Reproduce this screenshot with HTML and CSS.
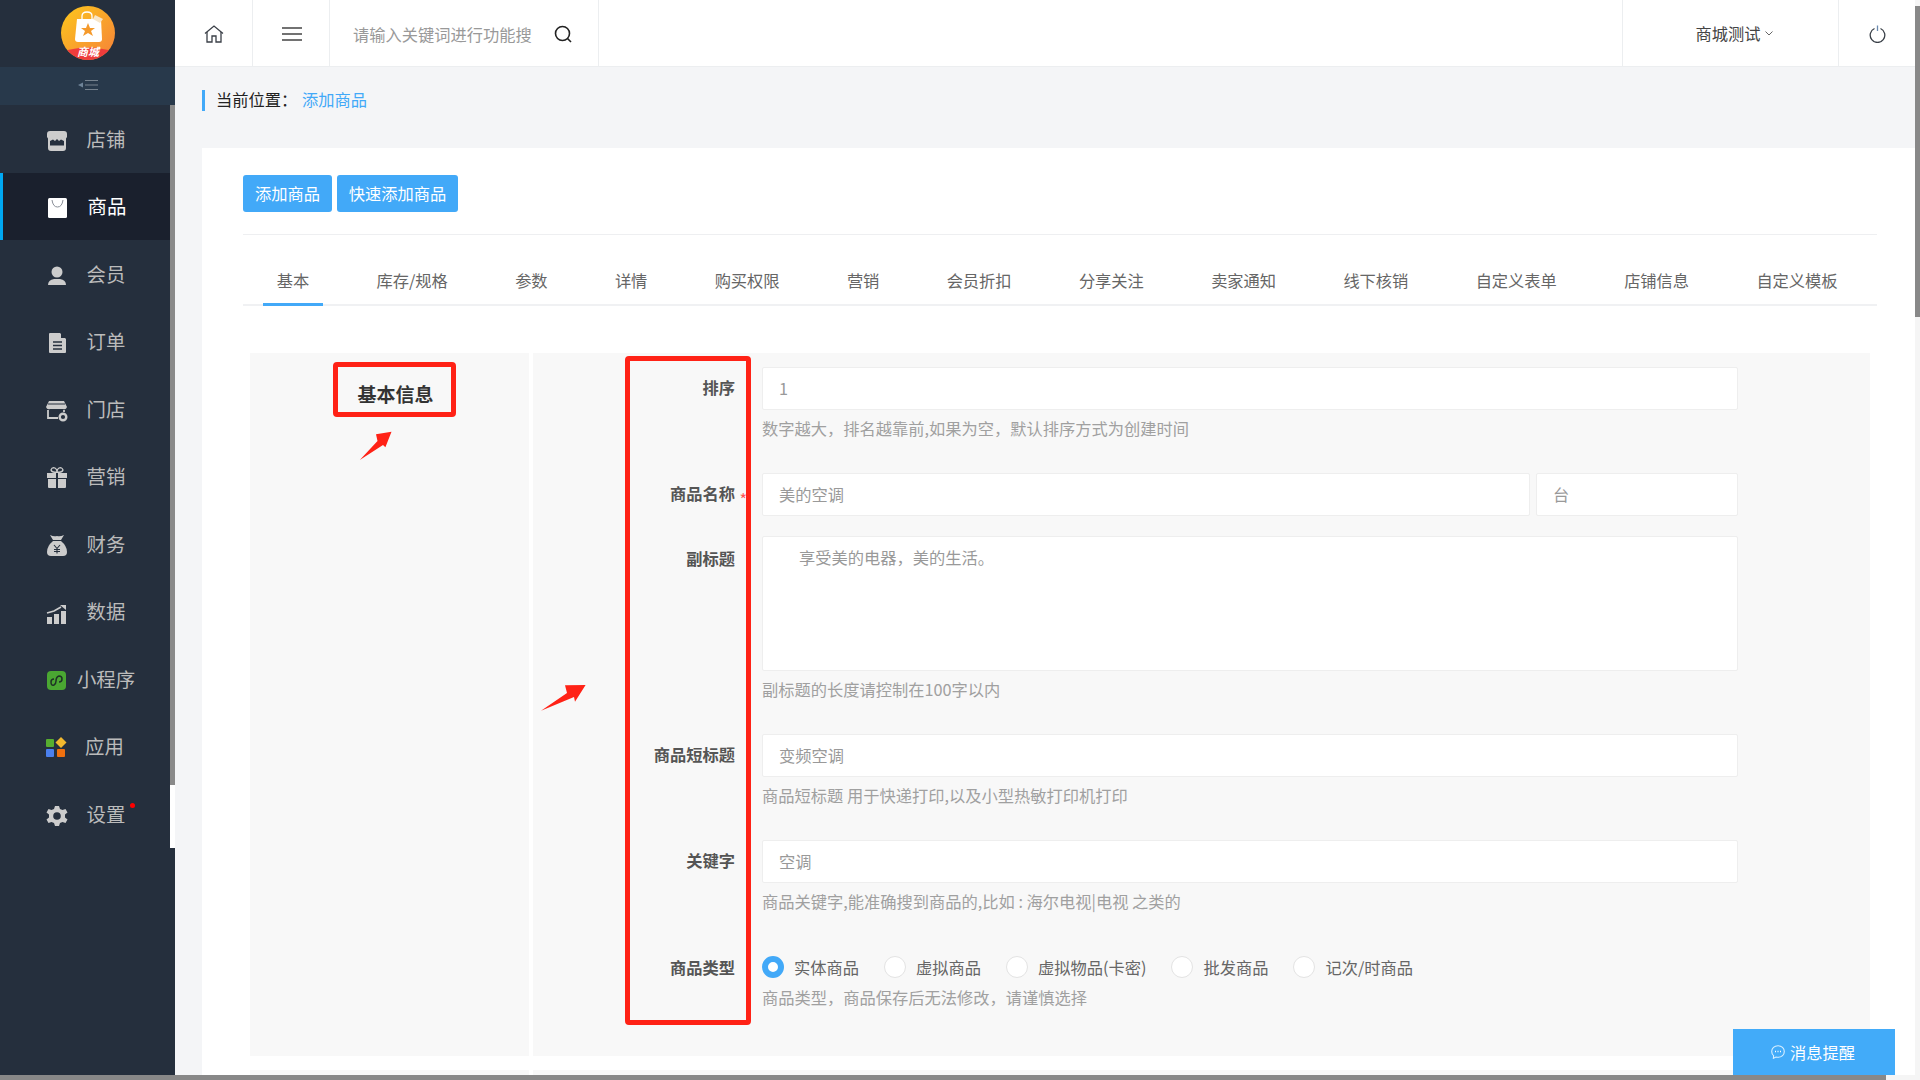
FILE: index.html
```html
<!DOCTYPE html>
<html lang="zh-CN">
<head>
<meta charset="utf-8">
<title>添加商品</title>
<link rel="stylesheet" href="styles.css">
</head>
<body>
<div class="app">
  <aside class="sidebar">
    <div class="logo">
      <svg width="54" height="54" viewBox="0 0 54 54">
        <defs>
          <linearGradient id="lg" x1="0" y1="0" x2="1" y2="1"><stop offset="0" stop-color="#fdc81c"/><stop offset="1" stop-color="#f5803a"/></linearGradient>
          <clipPath id="lc"><circle cx="27" cy="27" r="27"/></clipPath>
        </defs>
        <circle cx="27" cy="27" r="27" fill="url(#lg)"/>
        <path clip-path="url(#lc)" d="M0 46Q27 37 54 46V54H0Z" fill="#ee3c3c"/>
        <path d="M16 13H40L41 33Q41 36 38 36H17Q14 36 14 33Z" fill="#fff"/>
        <path d="M21 15V10Q21 6 26 6Q31 6 31 10V15" fill="none" stroke="#fff" stroke-width="1.3"/>
        <path d="M34 9L42 13L39 17L32 13Z" fill="#f8e6c8"/>
        <path d="M27 17L29 22H34L30 25L32 30L27 27L22 30L24 25L20 22H25Z" fill="#f59a2c"/>
        <text x="27" y="50" class="logo-text" text-anchor="middle">商城</text>
      </svg>
    </div>
    <div class="collapse">
      <svg width="20" height="10" viewBox="0 0 20 10"><path d="M5 2.5V7.5L0 5Z" fill="#6f8498"/><path d="M7 .5H20M7 5H20M7 9.5H20" stroke="#76828e" stroke-width="1.2"/></svg>
    </div>
    <nav class="nav">
      <a class="nav-item">
        <svg class="nav-icon" viewBox="0 0 22 22"><path d="M4 1H18Q21 1 21 4V7L20 8.500V18Q20 21 17 21H5Q2 21 2 18V8.500L1 7V4Q1 1 4 1Z" fill="#ccc"/><path d="M4 15.500V11L7 9.500L9 11L11 9L13 11L15 9.500L18 11V15.500Z" fill="#252f3d"/></svg>
        <span class="nav-text">店铺</span>
      </a>
      <a class="nav-item is-active">
        <svg class="nav-icon" viewBox="0 0 22 22"><rect x="2" y="1" width="19" height="20" rx="1.500" fill="#fff"/><path d="M6 3Q7 10 11.500 10Q16 10 17 3" fill="none" stroke="#8a8f98" stroke-width="1"/></svg>
        <span class="nav-text">商品</span>
      </a>
      <a class="nav-item">
        <svg class="nav-icon" viewBox="0 0 22 22"><circle cx="11" cy="7" r="5.500" fill="#ccc"/><path d="M2 20Q2 15 8 14H14Q20 15 20 20Z" fill="#ccc"/></svg>
        <span class="nav-text">会员</span>
      </a>
      <a class="nav-item">
        <svg class="nav-icon" viewBox="0 0 22 22"><path d="M4 1H14L20 7V20Q20 21 19 21H4Q3 21 3 20V2Q3 1 4 1Z" fill="#ccc"/><path d="M15 1L20 6H15Z" fill="#252f3d"/><path d="M7 10H16M7 13.500H16M7 17H16" stroke="#252f3d" stroke-width="1.300"/></svg>
        <span class="nav-text">订单</span>
      </a>
      <a class="nav-item">
        <svg class="nav-icon" viewBox="0 0 22 22"><path d="M3 1H18L21 7Q20 10 17 9H4Q1 10 0 7Z" fill="#ccc"/><path d="M2 4H19" stroke="#252f3d"/><path d="M2 10V18H12M18 10V12" fill="none" stroke="#ccc" stroke-width="1.800"/><circle cx="17" cy="17" r="3.300" fill="none" stroke="#ccc" stroke-width="2.400"/></svg>
        <span class="nav-text">门店</span>
      </a>
      <a class="nav-item">
        <svg class="nav-icon" viewBox="0 0 22 22"><path d="M11 5Q6 6 5 3Q6 0 9 1Q11 2 11 5Q11 2 13 1Q16 0 17 3Q16 6 11 5Z" fill="none" stroke="#ccc" stroke-width="1.300"/><path d="M1 6H10V11H1ZM12 6H21V11H12ZM2 12H10V21H3Q2 21 2 20ZM12 12H20V20Q20 21 19 21H12Z" fill="#ccc"/></svg>
        <span class="nav-text">营销</span>
      </a>
      <a class="nav-item">
        <svg class="nav-icon" viewBox="0 0 22 22"><path d="M4 0Q8 2 11 1Q14 2 18 0L15 5H7Z" fill="#ccc"/><path d="M7 6H15Q21 11 21 17Q21 21 17 21H5Q1 21 1 17Q1 11 7 6Z" fill="#ccc"/><path d="M8 10L11 13.500L14 10M11 13.500V18.500M8 14.500H14M8 16.500H14" fill="none" stroke="#252f3d" stroke-width="1.100"/></svg>
        <span class="nav-text">财务</span>
      </a>
      <a class="nav-item">
        <svg class="nav-icon" viewBox="0 0 22 22"><path d="M1 15H6V22H1ZM8 12H13V22H8ZM15 9H20V22H15Z" fill="#ccc"/><path d="M1 11L8 9L15 5" fill="none" stroke="#ccc" stroke-width="1.600"/><path d="M14 3H20V8Z" fill="#ccc"/></svg>
        <span class="nav-text">数据</span>
      </a>
      <a class="nav-item">
        <svg class="nav-icon" viewBox="0 0 22 22"><rect x="1" y="1" width="19" height="19" rx="4" fill="#4aa732"/><path d="M5 12Q5 9 8 9M5 12Q5 16 8 15Q10 14 10 11Q10 7 13 6Q16 6 16 9Q16 12 13 12" fill="none" stroke="#1e3325" stroke-width="1.500"/></svg>
        <span class="nav-text">小程序</span>
      </a>
      <a class="nav-item nav-item-app">
        <svg class="nav-icon" viewBox="0 0 22 22"><rect y="2" width="8" height="8" rx="1" fill="#57ad30"/><path d="M15 0L20.500 5.500L15 11L9.500 5.500Z" fill="#f2b82e"/><rect y="12" width="8" height="8" rx="1" fill="#4b80ee"/><rect x="11" y="12" width="8" height="8" rx="1" fill="#f0700f"/></svg>
        <span class="nav-text">应用</span>
      </a>
      <a class="nav-item">
        <svg class="nav-icon" viewBox="0 0 22 22"><path d="M9 1H13L14 4L16.500 5L19.500 4L21.500 7.500L19 9.500V12.500L21.500 14.500L19.500 18L16.500 17L14 18L13 21H9L8 18L5.500 17L2.500 18L.5 14.500L3 12.500V9.500L.5 7.500L2.500 4L5.500 5L8 4Z" fill="#ccc"/><circle cx="11" cy="11" r="3.800" fill="#252f3d"/></svg>
        <span class="nav-text">设置<i class="dot"></i></span>
      </a>
    </nav>
    <div class="side-track"></div>
    <div class="side-thumb"></div>
  </aside>

  <main class="main">
    <header class="topbar">
      <div class="top-cell top-cell-home">
        <svg width="20" height="18" viewBox="0 0 20 18" fill="none" stroke="#3a3f47" stroke-width="1.300"><path d="M1 8.500L10 1L19 8.500"/><path d="M3 7V17H8V11H12V17H17V7"/></svg>
      </div>
      <div class="top-cell top-cell-menu">
        <svg width="20" height="14" viewBox="0 0 20 14" fill="none" stroke="#444" stroke-width="1.500"><path d="M0 1H20M0 7H20M0 13H20"/></svg>
      </div>
      <div class="top-search">
        <span class="search-text">请输入关键词进行功能搜</span>
        <svg width="18" height="18" viewBox="0 0 18 18" fill="none" stroke="#222" stroke-width="1.600"><circle cx="8.500" cy="8.500" r="7"/><path d="M13.500 13.500L17 17"/></svg>
      </div>
      <div class="top-spacer"></div>
      <div class="top-store">
        <span>商城测试</span>
        <svg width="8" height="5" viewBox="0 0 8 5" fill="none" stroke="#666" stroke-width="1"><path d="M.5 .5L4 4L7.500 .5"/></svg>
      </div>
      <div class="top-power">
        <svg width="17" height="18" viewBox="0 0 17 18" fill="none" stroke="#3a4048" stroke-width="1.300"><path d="M5.500 3.500A7.300 7.300 0 1 0 11.500 3.500"/><path d="M8.500 .5V6" stroke="#6a8ab0"/></svg>
      </div>
    </header>

    <div class="content">
      <div class="crumb"><span class="crumb-label">当前位置：</span><a class="crumb-link">添加商品</a></div>

      <section class="card">
        <div class="btns">
          <button class="btn btn-a">添加商品</button>
          <button class="btn btn-b">快速添加商品</button>
        </div>
        <ul class="tabs">
          <li class="tab is-on">基本</li>
          <li class="tab">库存/规格</li>
          <li class="tab">参数</li>
          <li class="tab">详情</li>
          <li class="tab">购买权限</li>
          <li class="tab">营销</li>
          <li class="tab">会员折扣</li>
          <li class="tab">分享关注</li>
          <li class="tab">卖家通知</li>
          <li class="tab">线下核销</li>
          <li class="tab">自定义表单</li>
          <li class="tab">店铺信息</li>
          <li class="tab">自定义模板</li>
        </ul>

        <div class="panels">
          <div class="panel-side"><h3 class="panel-title">基本信息</h3></div>
          <div class="panel-form">
            <div class="row">
              <label class="row-label">排序</label>
              <div class="row-field">
                <input class="input" value="1">
                <p class="help">数字越大，排名越靠前,如果为空，默认排序方式为创建时间</p>
              </div>
            </div>
            <div class="row row-tight">
              <label class="row-label">商品名称<em class="req">*</em></label>
              <div class="row-field row-pair">
                <input class="input" value="美的空调">
                <input class="input input-unit" value="台">
              </div>
            </div>
            <div class="row">
              <label class="row-label row-label-area">副标题</label>
              <div class="row-field">
                <textarea class="area">享受美的电器，美的生活。</textarea>
                <p class="help">副标题的长度请控制在100字以内</p>
              </div>
            </div>
            <div class="row">
              <label class="row-label">商品短标题</label>
              <div class="row-field">
                <input class="input" value="变频空调">
                <p class="help">商品短标题 用于快递打印,以及小型热敏打印机打印</p>
              </div>
            </div>
            <div class="row">
              <label class="row-label">关键字</label>
              <div class="row-field">
                <input class="input" value="空调">
                <p class="help">商品关键字,能准确搜到商品的,比如 : 海尔电视|电视 之类的</p>
              </div>
            </div>
            <div class="row">
              <label class="row-label row-label-radio">商品类型</label>
              <div class="row-field">
                <div class="radios">
                  <span class="radio is-on"><i class="radio-dot"></i>实体商品</span>
                  <span class="radio"><i class="radio-dot"></i>虚拟商品</span>
                  <span class="radio"><i class="radio-dot"></i>虚拟物品(卡密)</span>
                  <span class="radio"><i class="radio-dot"></i>批发商品</span>
                  <span class="radio"><i class="radio-dot"></i>记次/时商品</span>
                </div>
                <p class="help help-flush">商品类型，商品保存后无法修改，请谨慎选择</p>
              </div>
            </div>
          </div>
        </div>
        <div class="panels panels-next">
          <div class="panel-side"></div>
          <div class="panel-form"></div>
        </div>
      </section>
    </div>
  </main>
</div>

<div class="mark mark-title"></div>
<div class="mark mark-labels"></div>
<svg class="arrow arrow-a" width="33" height="30" viewBox="0 0 33 30"><path d="M.8 29L18.500 10L17 3.300L32.500 .7L26.400 16.300L24 14Z" fill="#ff2216"/></svg>
<svg class="arrow arrow-b" width="46" height="27" viewBox="0 0 46 27"><path d="M0 25.700L26 8L24 .3L44.600 0L34 16.700L33 12Z" fill="#ff2216"/></svg>

<div class="msg">
  <svg width="14" height="14" viewBox="0 0 14 14"><path d="M7 .7C3.300 .7 .7 3.200 .7 6.500C.7 8.200 1.400 9.700 2.600 10.700L2.400 13.300L5 12.100C5.600 12.200 6.300 12.300 7 12.300C10.700 12.300 13.300 9.800 13.300 6.500S10.700 .7 7 .7Z" fill="none" stroke="#d8efff" stroke-width="1.100"/><path d="M4 6.500H5M6.500 6.500H7.500M9 6.500H10" stroke="#fff" stroke-width="1.300"/></svg>
  <span>消息提醒</span>
</div>

<div class="vbar-track"></div>
<div class="vbar-thumb"></div>
<div class="hbar-track"></div>
<div class="hbar-thumb"></div>
</body>
</html>
```
FILE: styles.css
```css
* { box-sizing: border-box; }
html, body { margin: 0; height: 100%; overflow: hidden; }
body {
  font-family: "Noto Sans CJK SC", "Liberation Sans", sans-serif;
  font-size: 16.25px;
  color: #555;
  background: #f4f5f7;
}
.app { display: flex; width: 1920px; height: 1080px; }

/* sidebar */
.sidebar { position: relative; flex: 0 0 175px; height: 1080px; background: #252f3d; }
.logo { height: 67px; display: flex; justify-content: center; align-items: center; padding: 0 0 1px 0; }
.logo-text { font-size: 11px; font-weight: 700; font-style: italic; fill: #fff; }
.collapse { height: 38px; background: #28394b; display: flex; justify-content: center; align-items: center; padding-bottom: 2px; }
.nav { width: 170px; }
.nav-item { height: 67.5px; display: flex; align-items: center; padding-left: 46px; color: #bbb; font-size: 19.4px; }
.nav-item.is-active { background: #1a202d; box-shadow: inset 3px 0 0 #00a8f3; color: #fff; }
.nav-icon { flex: 0 0 22px; width: 22px; height: 22px; margin-top: 4px; }
.nav-text { position: relative; width: 75px; padding-left: 1px; text-align: center; white-space: nowrap; line-height: 24px; }
.is-active .nav-text { padding-left: 3px; }
.nav-item-app .nav-text { padding-right: 3px; }
.dot { position: absolute; left: 62px; top: 1px; width: 5px; height: 5px; border-radius: 50%; background: #f00; }
.side-track { position: absolute; left: 170px; top: 785px; width: 5px; height: 63px; background: #fff; }
.side-thumb { position: absolute; left: 170px; top: 105px; width: 5px; height: 680px; background: #8a8a8a; }

/* main */
.main { flex: 1; min-width: 0; display: flex; flex-direction: column; padding-right: 5px; height: 1080px; overflow: hidden; background: #f4f5f7; }
.topbar { flex: 0 0 67px; display: flex; background: #fff; border-bottom: 1px solid #eceef0; }
.top-cell { flex: 0 0 78px; display: flex; align-items: center; justify-content: center; border-right: 1px solid #eceef0; padding-top: 2px; }
.top-cell-home { padding-left: 1px; }
.top-cell-menu { flex-basis: 77px; padding-left: 2px; }
.top-search { flex: 0 0 269px; display: flex; align-items: center; gap: 22px; padding: 2px 0 0 23px; border-right: 1px solid #eceef0; }
.search-text { color: #999; white-space: nowrap; }
.top-spacer { flex: 1; }
.top-store { flex: 0 0 216px; display: flex; align-items: center; justify-content: center; gap: 4px; color: #444; border-left: 1px solid #eceef0; padding-left: 7px; }
.top-power { flex: 0 0 77px; display: flex; align-items: center; justify-content: center; border-left: 1px solid #eceef0; padding: 2px 0 0 0; }

.content { flex: 1; min-height: 0; padding: 23px 0 0 27px; }
.crumb { height: 21px; line-height: 19px; border-left: 3px solid #42a9f8; padding-left: 11px; margin-bottom: 37px; color: #222; white-space: nowrap; }
.crumb-label { display: inline-block; width: 86px; }
.crumb-link { color: #42a9f8; }

.card { background: #fff; padding: 27px 38px 0 41px; height: 932px; overflow: hidden; }
.btns { display: flex; gap: 5px; padding-bottom: 22px; border-bottom: 1px solid #eeeff1; }
.btn { height: 37px; border: 0; border-radius: 3px; background: #42a9f8; color: #fff; font: inherit; padding: 0 0 2px; }
.btn-a { width: 89px; }
.btn-b { width: 121px; }

.tabs { list-style: none; margin: 21px 0 0; padding: 0 0 0 20px; display: flex; gap: 39.75px; border-bottom: 2px solid #f0f1f3; height: 50px; }
.tab { height: 50px; line-height: 48px; padding: 0 13.75px; color: #666; white-space: nowrap; }
.tab.is-on { border-bottom: 3px solid #42a9f8; }

.panels { display: flex; gap: 4px; margin: 47px 7px 0; height: 703px; }
.panels-next { margin-top: 14px; height: 60px; }
.panel-side { flex: 0 0 279px; background: #f8f8f8; }
.panel-form { flex: 1; background: #f8f8f8; padding: 14px 0 0; }
.panel-title { margin: 0; padding: 27px 0 0 12px; text-align: center; font-size: 19px; font-weight: 700; color: #333; line-height: 28px; }

.row { display: flex; margin-bottom: 33px; }
.row-tight { margin-bottom: 20px; }
.row-label { flex: 0 0 229px; padding-right: 27px; text-align: right; font-weight: 700; color: #555; line-height: 41px; position: relative; }
.row-label-area { line-height: 45px; }
.row-label-radio { line-height: 42px; }
.req { position: absolute; right: 15px; top: 6px; color: #f55; font-style: normal; font-weight: 400; }
.row-field { flex: 0 0 976px; }
.row-pair { display: flex; gap: 6px; }
.input { display: block; width: 100%; height: 43px; border: 1px solid #eeeeee; border-radius: 2px; background: #fff; padding: 0 16px 2px; font: inherit; color: #999; outline: 0; }
.input-unit { flex: 0 0 202px; width: 202px; }
.row-pair .input:first-child { flex: 1; min-width: 0; }
.area { display: block; width: 100%; height: 135px; border: 1px solid #eeeeee; border-radius: 2px; background: #fff; padding: 8px 16px; text-indent: 20px; font: inherit; line-height: 24px; color: #999; resize: none; outline: 0; }
.help { margin: 6px 0 0; line-height: 24px; color: #a0a0a0; white-space: nowrap; }
.help-flush { margin-top: -2px; }
.radios { display: flex; height: 40px; margin-top: 1px; align-items: center; gap: 25px; }
.radio { display: flex; align-items: center; gap: 10px; color: #666; white-space: nowrap; }
.radio-dot { flex: 0 0 22px; width: 22px; height: 22px; border-radius: 50%; border: 1px solid #e3e3e3; background: #fff; }
.radio.is-on .radio-dot { border: 6px solid #42a9f8; }

/* annotations on top of the shot */
.mark { position: absolute; border: 5px solid #ff2216; border-radius: 4px; }
.mark-title { left: 333px; top: 362px; width: 123px; height: 55px; }
.mark-labels { left: 625px; top: 356px; width: 126px; height: 669px; }
.arrow { position: absolute; }
.arrow-a { left: 359px; top: 431px; }
.arrow-b { left: 541px; top: 685px; }

.msg { position: absolute; left: 1733px; top: 1029px; width: 162px; height: 46px; background: #42abf9; color: #fff; display: flex; align-items: center; justify-content: center; gap: 5px; padding-right: 2px; }

/* page scrollbars */
.vbar-track { position: absolute; left: 1915px; top: 0; width: 5px; height: 1080px; background: #f5f5f5; }
.vbar-thumb { position: absolute; left: 1915px; top: 6px; width: 5px; height: 311px; background: #888; }
.hbar-track { position: absolute; left: 0; top: 1075px; width: 1920px; height: 5px; background: #f5f5f5; }
.hbar-thumb { position: absolute; left: 0; top: 1075px; width: 1886px; height: 5px; background: #888; }
```
